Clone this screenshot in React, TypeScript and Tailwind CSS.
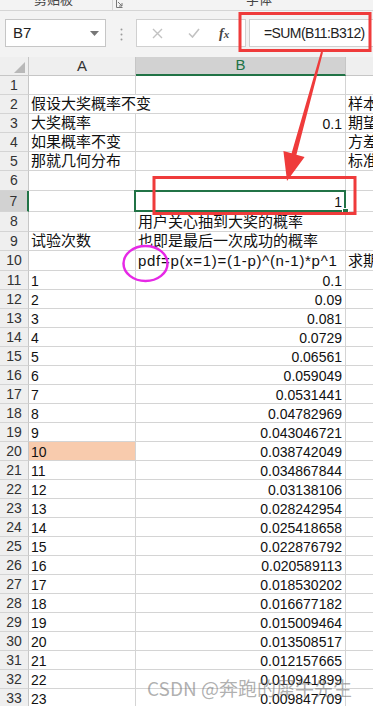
import React from "react";

type Row = {
  n: number;
  h: string;
  a?: string;
  b?: string;
  c?: string;
  aSpill?: boolean;
  aBg?: string;
};

const values = [
  "0.1", "0.09", "0.081", "0.0729", "0.06561", "0.059049", "0.0531441",
  "0.04782969", "0.043046721", "0.038742049", "0.034867844", "0.03138106",
  "0.028242954", "0.025418658", "0.022876792", "0.020589113", "0.018530202",
  "0.016677182", "0.015009464", "0.013508517", "0.012157665", "0.010941899",
  "0.009847709",
];

const rows: Row[] = [
  { n: 1, h: "h-[19px]" },
  { n: 2, h: "h-[19px]", a: "假设大奖概率不变", c: "样本量", aSpill: true },
  { n: 3, h: "h-[19px]", a: "大奖概率", b: "0.1", c: "期望" },
  { n: 4, h: "h-[19px]", a: "如果概率不变", c: "方差" },
  { n: 5, h: "h-[19px]", a: "那就几何分布", c: "标准差" },
  { n: 6, h: "h-[20px]" },
  { n: 7, h: "h-[21px]", b: "1" },
  { n: 8, h: "h-[20px]", b: "用户关心抽到大奖的概率" },
  { n: 9, h: "h-[19px]", a: "试验次数", b: "也即是最后一次成功的概率" },
  { n: 10, h: "h-[20px]", b: "pdf=p(x=1)=(1-p)^(n-1)*p^1", c: "求期望" },
  ...values.map((v, i) => ({
    n: 11 + i,
    h: "h-[19px]",
    a: String(i + 1),
    b: v,
    aBg: i === 9 ? "bg-[#f8cbad]" : "",
  })),
];

const isNum = (s: string) => /^[0-9.]+$/.test(s);

function CellText({ text, right }: { text: string; right?: boolean }) {
  const num = isNum(text);
  const formula = text.startsWith("pdf");
  return (
    <span
      className={`whitespace-nowrap leading-[18px] ${
        num ? "text-[14px] pt-[2px]" : "text-[15px]"
      } ${formula ? "tracking-[0.7px]" : ""} ${right ? "ml-auto pr-[3px]" : "pl-[2px]"}`}
    >
      {text}
    </span>
  );
}

function SheetRow({ r }: { r: Row }) {
  const sel = r.n === 7;
  return (
    <div className={`flex ${r.h}`}>
      <div
        className={`w-[29px] shrink-0 flex items-center justify-center border-b border-[#d4d4d4] text-[14px] text-[#333] ${
          sel ? "bg-[#d2d2d2] border-r-2 border-r-[#217346]" : "bg-[#efefef] border-r border-r-[#c6c6c6]"
        }`}
      >
        {r.n}
      </div>
      <div
        className={`w-[107px] shrink-0 flex items-center border-b border-[#d4d4d4] ${
          r.aSpill ? "" : "border-r"
        } ${r.aBg ?? ""}`}
      >
        {r.a && <CellText text={r.a} />}
      </div>
      <div className="relative w-[210px] shrink-0 flex items-center border-b border-r border-[#d4d4d4]">
        {r.b && <CellText text={r.b} right={isNum(r.b)} />}
        {sel && (
          <>
            <div className="absolute -top-[1px] -left-[2px] -right-[1px] -bottom-[1px] border-2 border-[#217346]" />
            <div className="absolute -right-[4px] -bottom-[4px] w-[7px] h-[7px] bg-[#217346] border border-white" />
          </>
        )}
      </div>
      <div className="flex-1 flex items-center border-b border-[#d4d4d4] overflow-hidden">
        {r.c && <CellText text={r.c} />}
      </div>
    </div>
  );
}

function FormulaBar() {
  return (
    <div className="h-[46px] bg-[#f3f3f3] flex items-start pt-[8px] pl-[5px]">
      <div className="w-[101px] h-[28px] bg-white border border-[#c6c6c6] flex items-center pl-[7px] pr-[6px]">
        <span className="text-[15px] text-[#222]">B7</span>
        <svg className="ml-auto" width="9" height="5" viewBox="0 0 9 5">
          <path d="M0 0H9L4.5 5Z" fill="#777" />
        </svg>
      </div>
      <svg className="ml-[14px] mt-[9px]" width="3" height="13" viewBox="0 0 3 13">
        <circle cx="1.5" cy="1.5" r="1" fill="#9a9a9a" />
        <circle cx="1.5" cy="6.5" r="1" fill="#9a9a9a" />
        <circle cx="1.5" cy="11.5" r="1" fill="#9a9a9a" />
      </svg>
      <div className="ml-[13px] w-[110px] h-[28px] bg-white border border-[#d0d0d0] flex items-center">
        <svg className="ml-[15px]" width="11" height="11" viewBox="0 0 11 11">
          <path d="M1 1L10 10M10 1L1 10" stroke="#c2c2c2" strokeWidth="1.4" />
        </svg>
        <svg className="ml-[25px]" width="12" height="10" viewBox="0 0 12 10">
          <path d="M1 5.5L4.5 9L11 1" stroke="#c2c2c2" strokeWidth="1.6" fill="none" />
        </svg>
        <span className="ml-[19px] text-[14px] italic text-[#444] font-['Liberation_Serif',serif] font-bold">
          f<span className="text-[11px]">x</span>
        </span>
      </div>
      <div className="ml-[3px] flex-1 h-[28px] bg-white border-y border-l border-[#d0d0d0] flex items-center pl-[14px]">
        <span className="text-[14px] tracking-[-0.6px] text-[#222] whitespace-nowrap">=SUM(B11:B312)</span>
      </div>
    </div>
  );
}

function Ribbon() {
  return (
    <div className="h-[11px] bg-[#f3f3f3] border-b border-[#d5d5d5] relative overflow-hidden text-[13px] text-[#444]">
      <span className="absolute left-[34px] -top-[10px]">剪贴板</span>
      <div className="absolute left-[112px] top-0 h-[10px] border-l border-[#d5d5d5]" />
      <svg className="absolute left-[116px] top-0" width="7" height="8" viewBox="0 0 7 8">
        <path d="M0.5 0V7.5H6.5M2 2L6 6M6 3V6H3" stroke="#777" strokeWidth="1" fill="none" />
      </svg>
      <span className="absolute left-[246px] -top-[10px]">字体</span>
    </div>
  );
}

export default function App() {
  return (
    <div className="relative w-[373px] h-[706px] overflow-hidden bg-white font-['Liberation_Sans','Noto_Sans_CJK_SC',sans-serif] text-[#111]">
      <Ribbon />
      <FormulaBar />

      <div className="flex h-[19px] bg-[#efefef] text-[15px] text-[#333]">
        <div className="w-[29px] shrink-0 border-r border-b border-[#c6c6c6] flex items-end justify-end pr-[3px] pb-[2px]">
          <svg width="11" height="11" viewBox="0 0 11 11">
            <path d="M11 0V11H0Z" fill="#b8b8b8" />
          </svg>
        </div>
        <div className="w-[107px] shrink-0 border-r border-b border-[#c6c6c6] flex items-center justify-center">A</div>
        <div className="w-[210px] shrink-0 border-r border-[#c6c6c6] border-b-2 border-b-[#217346] bg-[#d2d2d2] flex items-center justify-center text-[#217346]">
          B
        </div>
        <div className="flex-1 border-b border-[#c6c6c6]" />
      </div>

      {rows.map((r) => (
        <SheetRow key={r.n} r={r} />
      ))}

      <svg className="absolute left-0 top-0 pointer-events-none" width="373" height="706" viewBox="0 0 373 706">
        <rect x="240" y="13.5" width="130" height="37" fill="none" stroke="#ef3b3b" strokeWidth="3" />
        <rect x="154" y="177.5" width="201" height="36" fill="none" stroke="#ef3b3b" strokeWidth="3" />
        <polygon
          points="321,51.7 323,52.3 296.4,154.7 304.6,156.9 287,181 283.4,151.1 291.6,153.3"
          fill="#ef3b3b"
        />
        <ellipse cx="145.5" cy="263.5" rx="22" ry="17.5" fill="none" stroke="#e629e6" strokeWidth="2.5" />
      </svg>

      <span className="absolute left-[147px] top-[676px] text-[19px] leading-[24px] text-[rgba(110,110,110,0.55)] font-['Noto_Sans_CJK_SC',sans-serif] whitespace-nowrap">
        CSDN @奔跑的犀牛先生
      </span>
    </div>
  );
}
